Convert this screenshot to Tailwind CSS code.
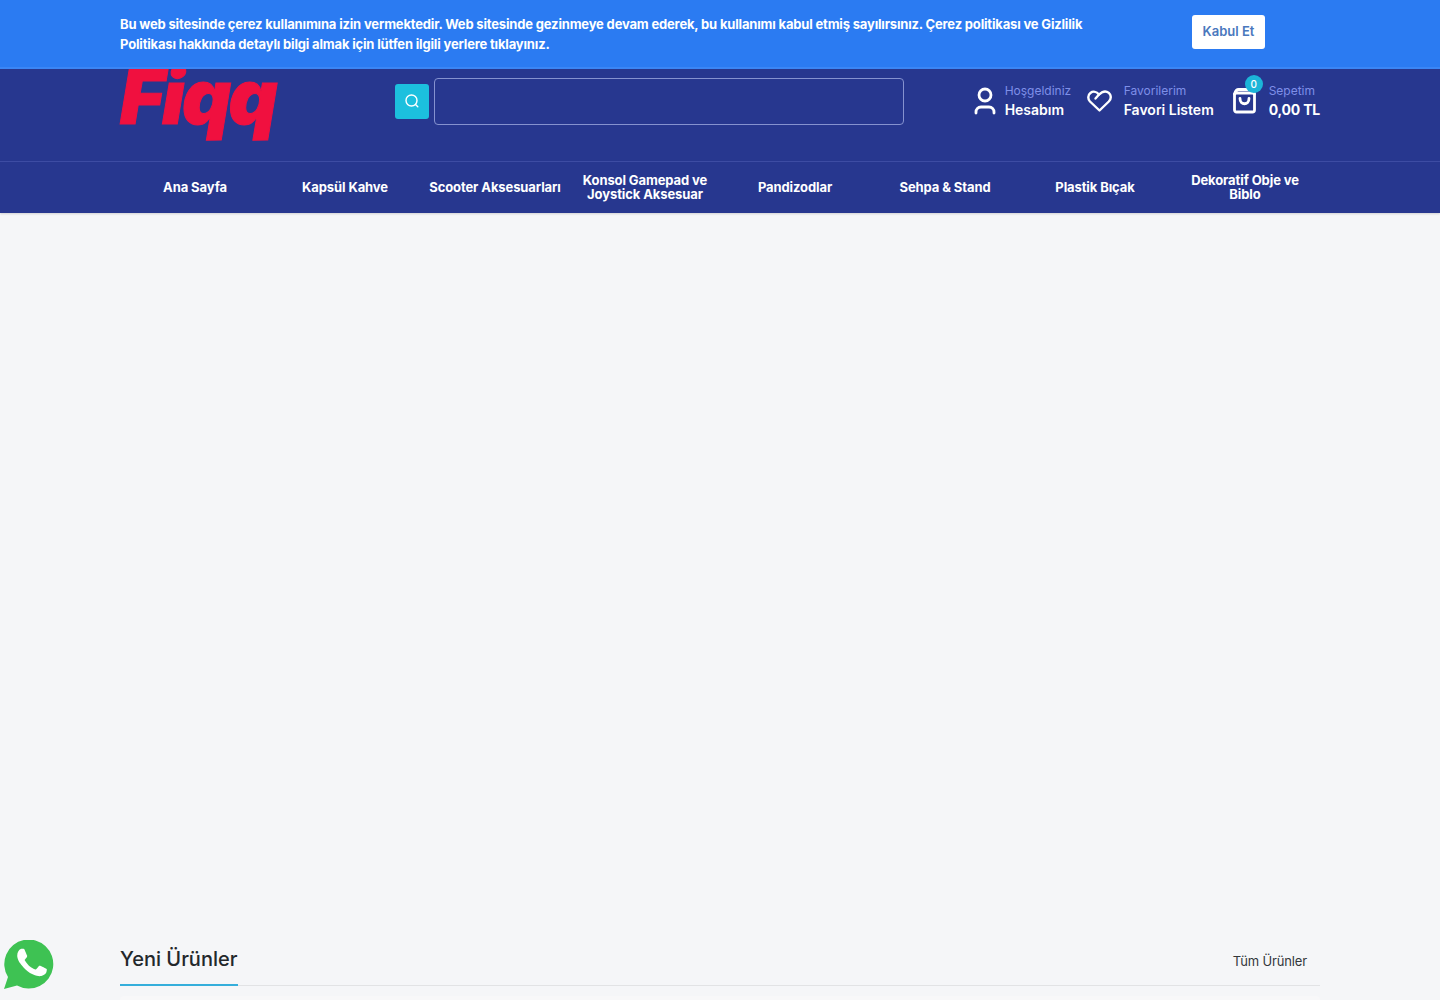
<!DOCTYPE html>
<html lang="tr">
<head>
    <meta charset="UTF-8">
    <title>Fiqq</title>
    <script src="https://cdn.jsdelivr.net/npm/@tailwindcss/browser@4"></script>
</head>
<body class="bg-[#f5f6f8] font-['Inter',sans-serif] h-[1000px] overflow-hidden relative">
    <!-- cookie bar -->
    <div class="absolute top-0 left-0 w-full h-[69px] z-10 bg-[#2b7bf2] border-b-2 border-[#3b86f5]">
        <div class="w-[1200px] mx-auto flex items-start">
            <p class="w-[1000px] pt-[14px] text-[13px] leading-[20px] font-bold tracking-[-0.17px] text-white">Bu web sitesinde çerez kullanımına izin vermektedir. Web sitesinde gezinmeye devam ederek, bu kullanımı kabul etmiş sayılırsınız. Çerez politikası ve Gizlilik Politikası hakkında detaylı bilgi almak için lütfen ilgili yerlere tıklayınız.</p>
            <button class="ml-[72px] mt-[15px] w-[73px] h-[34px] bg-white rounded-[3px] text-[13px] font-semibold text-[#4a78bd]">Kabul Et</button>
        </div>
    </div>

    <!-- header -->
    <header class="bg-[#27378f] shadow-[0_1px_2px_rgba(0,0,0,0.15)]">
        <div class="w-[1200px] mx-auto h-[161px] pt-[41px] flex items-center">
            <div class="w-[275px] h-[120px] flex items-center relative">
                <span class="block mt-[-11px] text-[76px] leading-none font-black italic tracking-[-2.500px] text-[#f0103f] [-webkit-text-stroke:1px_#f0103f]">Fiqq</span>
            </div>
            <button class="w-[35px] h-[35px] rounded-[3px] bg-[#1cc0de] flex items-center justify-center">
                <svg width="16" height="16" viewBox="0 0 16 16" fill="none" stroke="#fff" stroke-width="1.400" stroke-linecap="round"><circle cx="7.500" cy="7.500" r="5.500"/><path d="M11.800 11.800l2 2"/></svg>
            </button>
            <div class="ml-[5px] w-[470px] h-[47px] rounded-[4px] border border-[#8592cf] bg-[#27378f]"></div>
            <div class="ml-[70px] flex items-center">
                <svg class="mr-[9px]" width="22" height="28" viewBox="0 0 22 28" fill="none" stroke="#fff" stroke-width="2.800" stroke-linecap="round"><circle cx="11" cy="8" r="6"/><path d="M2 26v-1c0-3 2-5 5-5h8c3 0 5 2 5 5v1"/></svg>
                <div class="w-[82px]">
                    <div class="text-[12px] leading-[16px] text-[#7f8fe8]">Hoşgeldiniz</div>
                    <div class="mt-[2px] text-[14px] leading-[18px] font-semibold text-white">Hesabım</div>
                </div>
            </div>
            <div class="flex items-center">
                <svg class="mr-[12px]" width="25" height="22" viewBox="0 0 25 22" fill="none" stroke="#fff" stroke-width="2.400" stroke-linejoin="round" stroke-linecap="round"><path d="M12.500 20.500L3 11.500C.6 9 .8 5 3.400 3 6 1 9.500 1.600 12 4.500l3.500-2.400c3-1.400 6.300-.2 7.600 2.400 1.100 2.300.6 5-1.300 7z"/><path d="M12 4.500L8.500 8.500"/></svg>
                <div class="w-[109px]">
                    <div class="text-[12px] leading-[16px] text-[#7f8fe8]">Favorilerim</div>
                    <div class="mt-[2px] text-[14px] leading-[18px] font-semibold text-white">Favori Listem</div>
                </div>
            </div>
            <div class="flex items-center relative">
                <svg class="mr-[13px]" width="23" height="26" viewBox="0 0 23 26" fill="none" stroke="#fff" stroke-width="2.800" stroke-linejoin="round" stroke-linecap="round"><rect x="1.500" y="5" width="20" height="19" rx="2"/><path d="M1.500 6c1-3 2-4.500 4-4.500h12c2 0 3 1.500 4 4.500"/><path d="M7 10.500c0 7 9 7 9 0"/></svg>
                <span class="absolute left-[12px] top-[-8px] w-[18px] h-[18px] rounded-full bg-[#1cb5d8] text-white text-[10px] leading-[18px] text-center font-medium">0</span>
                <div class="whitespace-nowrap">
                    <div class="text-[12px] leading-[16px] text-[#7f8fe8]">Sepetim</div>
                    <div class="mt-[2px] text-[14px] leading-[18px] font-bold tracking-[-0.2px] text-white">0,00 TL</div>
                </div>
            </div>
        </div>
        <nav class="border-t border-[#3d4ca3] h-[52px]">
            <ul class="w-[1200px] mx-auto h-full pb-[2px] grid grid-cols-8 items-center text-center text-[13px] leading-[14px] font-bold tracking-[-0.1px] text-white">
                <li>Ana Sayfa</li>
                <li>Kapsül Kahve</li>
                <li>Scooter Aksesuarları</li>
                <li class="px-[10px]">Konsol Gamepad ve Joystick Aksesuar</li>
                <li>Pandizodlar</li>
                <li>Sehpa &amp; Stand</li>
                <li>Plastik Bıçak</li>
                <li class="px-[20px]">Dekoratif Obje ve Biblo</li>
            </ul>
        </nav>
    </header>

    <!-- new products -->
    <section class="w-[1200px] mx-auto mt-[723px]">
        <div class="h-[50px] flex items-center justify-between border-b border-[#e2e3e5] relative">
            <h2 class="mb-[4px] text-[20px] font-medium text-[#23272b]">Yeni Ürünler</h2>
            <a class="mr-[13px] pt-[3px] text-[13px] tracking-[-0.15px] text-[#33373b]">Tüm Ürünler</a>
            <div class="absolute left-0 bottom-[-1px] w-[118px] h-[2px] bg-[#35aedb]"></div>
        </div>
        <div class="mt-[10px] h-[20px] rounded-[4px] bg-[#f8f8f9]"></div>
    </section>

    <!-- whatsapp -->
    <div class="absolute left-[4px] top-[940px] w-[50px] h-[50px]">
        <svg width="50" height="50" viewBox="0 0 50 50">
            <path d="M0 49l4-12A24.500 24.500 0 1 1 13 45.500z" fill="#3ec253"/>
            <path transform="translate(-1.500 -7) scale(2.450)" fill="#fff" d="M17.472 14.382c-.297-.149-1.758-.867-2.030-.967-.273-.099-.471-.148-.67.150-.197.297-.767.966-.94 1.164-.173.199-.347.223-.644.075-.297-.150-1.255-.463-2.390-1.475-.883-.788-1.480-1.761-1.653-2.059-.173-.297-.018-.458.130-.606.134-.133.298-.347.446-.520.149-.174.198-.298.298-.497.099-.198.050-.371-.025-.520-.075-.149-.669-1.612-.916-2.207-.242-.579-.487-.500-.669-.510-.173-.008-.371-.010-.570-.010-.198 0-.520.074-.792.372-.272.297-1.040 1.016-1.040 2.479 0 1.462 1.065 2.875 1.213 3.074.149.198 2.096 3.200 5.077 4.487.709.306 1.262.489 1.694.625.712.227 1.360.195 1.871.118.571-.085 1.758-.719 2.006-1.413.248-.694.248-1.289.173-1.413-.074-.124-.272-.198-.570-.347z"/>
        </svg>
    </div>
</body>
</html>
